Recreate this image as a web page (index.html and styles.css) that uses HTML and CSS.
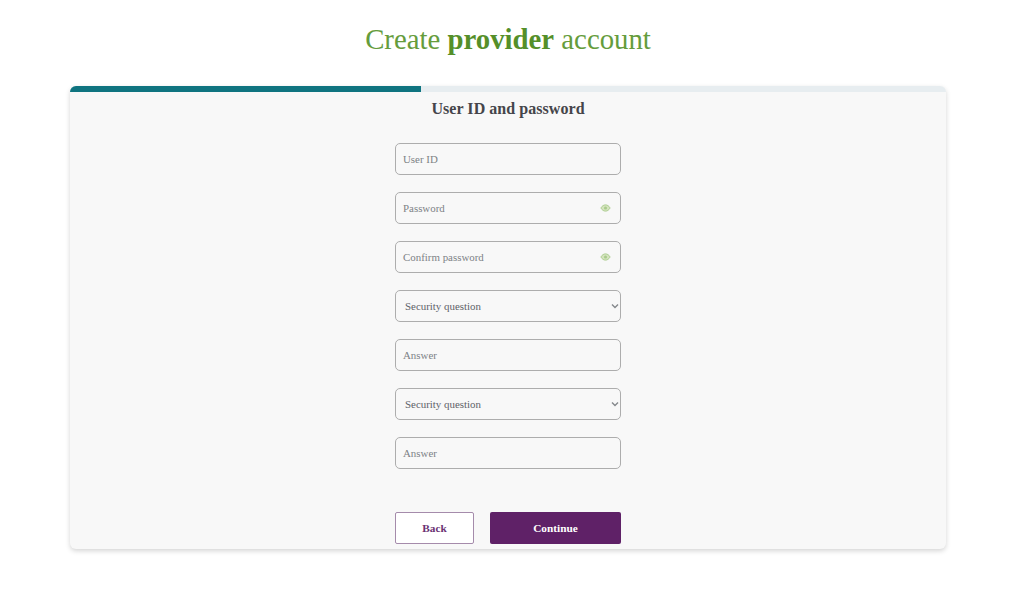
FILE: index.html
```html
<!DOCTYPE html>
<html lang="en">
<head>
<meta charset="utf-8">
<title>Create provider account</title>
<link rel="stylesheet" href="styles.css">
</head>
<body>
<h1 class="title">Create <b>provider</b> account</h1>
<main class="card">
  <div class="progress"><div class="progress-fill"></div></div>
  <h2 class="step-title">User ID and password</h2>
  <form class="form">
    <div class="field"><span class="hint">User ID</span></div>
    <div class="field"><span class="hint">Password</span>
      <svg class="eye" viewBox="0 0 16 12" aria-hidden="true"><path d="M1 6C3 2.8 5.3 1.3 8 1.3S13 2.8 15 6c-2 3.2-4.3 4.7-7 4.7S3 9.200 1 6Z"/><circle cx="8" cy="6" r="2.300"/></svg>
    </div>
    <div class="field"><span class="hint">Confirm password</span>
      <svg class="eye" viewBox="0 0 16 12" aria-hidden="true"><path d="M1 6C3 2.8 5.3 1.3 8 1.3S13 2.8 15 6c-2 3.2-4.3 4.7-7 4.7S3 9.200 1 6Z"/><circle cx="8" cy="6" r="2.300"/></svg>
    </div>
    <div class="field select"><span class="select-text">Security question</span>
      <svg class="chev" viewBox="0 0 8 6" aria-hidden="true"><path d="M1 1.500 4 4.500 7 1.500"/></svg>
    </div>
    <div class="field"><span class="hint">Answer</span></div>
    <div class="field select"><span class="select-text">Security question</span>
      <svg class="chev" viewBox="0 0 8 6" aria-hidden="true"><path d="M1 1.500 4 4.500 7 1.500"/></svg>
    </div>
    <div class="field"><span class="hint">Answer</span></div>
    <div class="actions">
      <button type="button" class="btn back">Back</button>
      <button type="button" class="btn next">Continue</button>
    </div>
  </form>
</main>
</body>
</html>
```
FILE: styles.css
```css
* { box-sizing: border-box; }
html, body { margin: 0; padding: 0; }
body {
  width: 1024px;
  height: 593px;
  overflow: hidden;
  background: #fff;
  font-family: "Liberation Serif", "Times New Roman", serif;
  padding-top: 24px;
}
.title {
  width: 876px;
  margin: 0 0 30px 70px;
  height: 32px;
  line-height: 31px;
  text-align: center;
  font-size: 28.800px;
  font-weight: 400;
  color: #659c3c;
}
.title b { font-weight: 700; color: #558f29; }
.card {
  width: 876px;
  height: 463px;
  margin-left: 70px;
  background: #f8f8f8;
  border-radius: 6px;
  box-shadow: 0 2px 5px rgba(0, 0, 0, 0.17);
  overflow: hidden;
}
.progress { height: 6px; background: #e7edf0; }
.progress-fill { width: 351px; height: 100%; background: #0f7480; }
.step-title {
  margin: 7px 0 0;
  height: 20px;
  line-height: 20px;
  text-align: center;
  font-size: 16px;
  font-weight: 700;
  color: #45454a;
  letter-spacing: 0.05px;
}
.form {
  width: 226px;
  margin: 24px 0 0 325px;
  display: flex;
  flex-direction: column;
  gap: 16.800px;
}
.field {
  height: 32.200px;
  border: 1.500px solid #adadad;
  border-radius: 5px;
  padding: 0 7px;
  display: flex;
  align-items: center;
  justify-content: space-between;
  font-size: 10.900px;
}
.hint { color: #7d8286; }
.select { padding: 0 1px 0 9px; }
.select-text { color: #5e6268; }
.eye { width: 11px; height: 8px; margin-right: 2px; }
.eye path { fill: #d5e3bf; stroke: #a9cc8c; stroke-width: 1.300; }
.eye circle { fill: #a9cc8c; }
.chev { width: 8px; height: 6px; margin-right: 0; }
.chev path { fill: none; stroke: #85888c; stroke-width: 1.400; }
.actions {
  display: flex;
  gap: 16px;
  margin-top: 26px;
}
.btn {
  height: 32px;
  font-family: inherit;
  font-size: 11.300px;
  font-weight: 700;
  border-radius: 2px;
  padding: 0;
}
.back {
  width: 79px;
  background: #fff;
  color: #6b3273;
  border: 1.500px solid #a58bab;
}
.next {
  width: 131px;
  background: #5f2167;
  color: #fff;
  border: none;
}
```
